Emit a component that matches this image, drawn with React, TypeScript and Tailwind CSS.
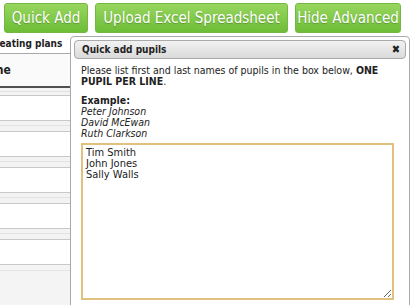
import React from "react";

const font = { fontFamily: '"DejaVu Sans Condensed", "DejaVu Sans", Verdana, sans-serif' };

function GreenButton({ label, width }: { label: string; width: string }) {
  return (
    <button
      className={`h-[30px] ${width} rounded-[3px] border border-[#74b843] bg-gradient-to-b from-[#97d65e] to-[#6dbd36] text-[15px] text-white [text-shadow:0_1px_1px_rgba(0,0,0,0.25)]`}
    >
      {label}
    </button>
  );
}

function Row() {
  return (
    <div>
      <div className="border-y border-[#c8c8c8] bg-[#f3f3f3]">
        <div className="h-[4px]" />
        <div className="h-px bg-[#e2e2e2]" />
        <div className="h-[5px]" />
      </div>
      <div className="h-[24px] bg-white" />
    </div>
  );
}

export default function App() {
  return (
    <div className="h-[305px] w-[410px] overflow-hidden bg-white text-[#222]" style={font}>
      <div className="flex gap-[7px] pl-[4px] pt-[3px]">
        <GreenButton label="Quick Add" width="w-[84px]" />
        <GreenButton label="Upload Excel Spreadsheet" width="w-[193px]" />
        <GreenButton label="Hide Advanced" width="w-[106px]" />
      </div>

      <div className="mt-px flex">
        {/* left panel, mostly covered */}
        <div className="flex w-[70px] shrink-0 flex-col overflow-hidden">
          <div className="ml-[-7px] h-[19px] whitespace-nowrap pt-[3px] text-[10px] font-bold leading-[14px]">
            Seating plans
          </div>
          <div className="h-px bg-[#a8a8a8]" />
          <div className="ml-[-24px] flex h-[32px] items-center whitespace-nowrap bg-[#fafafa] text-[12px] font-bold">
            Name
          </div>
          <div className="h-[2px] bg-[#505050]" />
          <div className="bg-[#f3f3f3]">
            <div className="h-[3px]" />
            <div className="h-px bg-[#e2e2e2]" />
            <div className="h-[3px]" />
          </div>
          <div className="h-px bg-[#c8c8c8]" />
          <div className="h-[24px] bg-white" />
          <Row />
          <Row />
          <Row />
          <Row />
          <div className="h-px bg-[#c8c8c8]" />
          <div className="flex-1 bg-[#f4f4f4]">
            <div className="h-[5px]" />
            <div className="h-px bg-[#e4e4e4]" />
            <div className="h-[40px]" />
          </div>
        </div>

        {/* dialog */}
        <div className="mt-[2px] h-[300px] w-[340px] shrink-0 rounded-t-[4px] border border-[#aaaaaa] bg-white p-[3px]">
          <div className="flex h-[19px] items-center justify-between rounded-[4px] border border-[#aaaaaa] bg-gradient-to-b from-[#f2f2f2] to-[#dadada] pl-[7px] pr-[5px]">
            <span className="text-[10px] font-bold">Quick add pupils</span>
            <span className="text-[11px] font-bold leading-none">✖</span>
          </div>
          <div className="pl-[7px] pt-[6px] text-[10.5px] leading-[11px]">
            <p>
              Please list first and last names of pupils in the box below, <b>ONE PUPIL PER LINE</b>.
            </p>
            <p className="mt-[8px] font-bold">Example:</p>
            <p className="italic">Peter Johnson</p>
            <p className="italic">David McEwan</p>
            <p className="italic">Ruth Clarkson</p>
            <textarea
              className="mt-[4px] block h-[157px] w-[313px] resize border-2 border-[#e0c27e] px-[3px] py-[2px] text-[11px] leading-[11px] text-[#222] outline-none"
              defaultValue={"Tim Smith\nJohn Jones\nSally Walls"}
              style={font}
            />
          </div>
        </div>
      </div>
    </div>
  );
}
